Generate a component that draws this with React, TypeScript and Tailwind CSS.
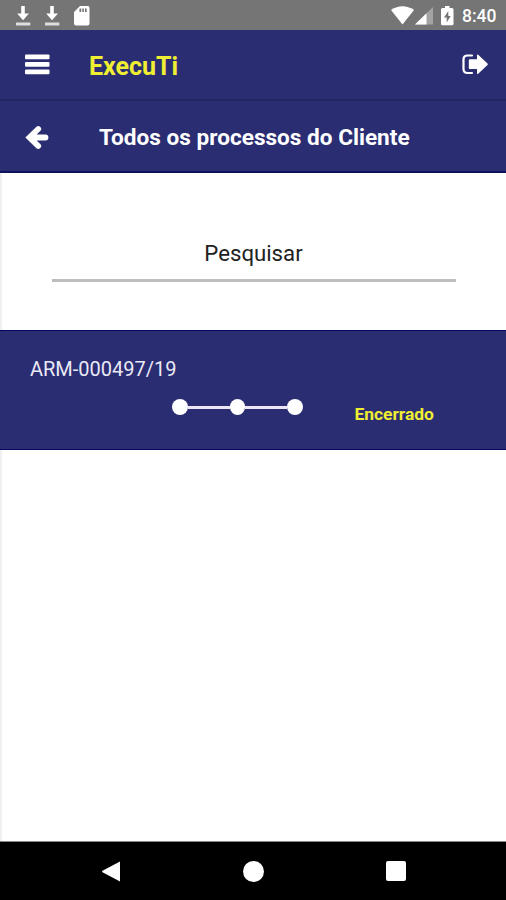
const steps = [0, 1, 2];

function DownloadIcon() {
  return (
    <svg className="h-[20px] w-[15px]" viewBox="0 0 15 20" fill="none">
      <path d="M5.2 0h3.600v7.500H13L7 14.200 1.200 7.500h4z" fill="#fff" />
      <path d="M0 16.500h14.300v3H0z" fill="#dedede" />
    </svg>
  );
}

function StatusBar() {
  return (
    <div className="flex h-[30px] items-start bg-[#757575] pl-[16px] pt-[5.5px]">
      <DownloadIcon />
      <div className="ml-[14px]">
        <DownloadIcon />
      </div>
      <svg className="ml-[13.5px] h-[20px] w-[16px]" viewBox="0 0 16 20">
        <path
          fillRule="evenodd"
          d="M6 0h7.7Q15.5 0 15.5 2v15.500q0 2-2 2H2q-2 0-2-2V6zM5.500 2.500v3.500h1.700V2.500zM8.300 2.500v3.500h1.600V2.500zM11 2.500v3.500h1.700V2.500z"
          fill="#fff"
        />
      </svg>

      <svg className="ml-[301px] h-[19px] w-[23px]" viewBox="0 0 23 19">
        <path d="M0 4Q11.500-3.500 23 4L11.500 18.500z" fill="#fff" />
      </svg>
      <svg className="ml-[1px] h-[19px] w-[18px]" viewBox="0 0 18 19">
        <path d="M18 1v17.500H0z" fill="#a3a3a3" />
        <path d="M11.500 7.300v11.200H0z" fill="#fff" />
      </svg>
      <svg className="ml-[8.500px] h-[20px] w-[13px]" viewBox="0 0 13 20">
        <path d="M4 0h4.500v2H11q1.500 0 1.500 1.500v14.200q0 1.500-1.500 1.500H1.500Q0 19.200 0 17.700V3.500Q0 2 1.500 2H4z" fill="#fff" />
        <path d="M7.300 5 3 11.500h2.700V16.500L9.700 10H7.300z" fill="#757575" />
      </svg>
      <span className="ml-[8px] text-[17.500px] font-medium leading-[20px] text-white">8:40</span>
    </div>
  );
}

function Header() {
  return (
    <header className="text-white">
      <div className="flex h-[69px] items-center bg-[#2b2d73] pl-[25px] pr-[18px]">
        <svg className="h-[21px] w-[25px]" viewBox="0 0 25 21" fill="#fff">
          <rect y="0.500" width="24.500" height="4.700" rx="1" />
          <rect y="8" width="24.500" height="4.700" rx="1" />
          <rect y="15.500" width="24.500" height="4.700" rx="1" />
        </svg>
        <h1 className="ml-[39px] mt-[4px] text-[25px] font-bold leading-8 text-[#efee32]">ExecuTi</h1>
        <svg className="ml-auto h-[21px] w-[26px]" viewBox="0 0 26 21">
          <path d="M10 1.500H5.500Q1.500 1.500 1.500 5.500v9.500q0 4 4 4h4.500" fill="none" stroke="#fff" strokeWidth="2.200" strokeLinecap="round" />
          <path d="M8 5.300h7V1.300q0-1.400 1.200-.5l9.300 8.800q.7.700 0 1.400l-9.300 8.700q-1.200.8-1.200-.6v-4H8q-1.200 0-1.200-1.200V6.500q0-1.200 1.200-1.200z" fill="#fff" />
        </svg>
      </div>
      <div className="flex h-[74px] items-center border-t-2 border-b-2 border-t-[#24255f] border-b-[#11105f] bg-[#2b2d73] pl-[25px]">
        <svg className="mt-[2px] h-[25px] w-[24px]" viewBox="0 0 24 25">
          <path d="M13.200 4 4.500 12.500l8.700 8.500M5.500 12.500h15" fill="none" stroke="#fff" strokeWidth="5.800" strokeLinejoin="miter" strokeLinecap="round" />
        </svg>
        <h2 className="ml-[50px] mt-[3px] text-[22.600px] font-bold leading-8">Todos os processos do Cliente</h2>
      </div>
    </header>
  );
}

function SearchField() {
  return (
    <div className="flex h-[157px] flex-col border-l-2 border-[#f0f0f0] pl-[50px] pr-[50px] pt-[60px]">
      <div className="h-[49px] border-b-[3px] border-[#bdbdbd] pt-[5px] pr-[1px] text-center text-[22.200px] leading-[30px] text-[#212121]">
        Pesquisar
      </div>
    </div>
  );
}

function ProcessCard() {
  return (
    <section className="flex h-[120px] border-y border-[#06055a] bg-[#2b2d73]">
      <div className="w-[172px] pl-[30px] pt-[24px] text-[20px] leading-7 text-[#e9e9f5]">
        <span className="whitespace-nowrap">ARM-000497/19</span>
      </div>
      <div className="mt-[68px] flex h-4 items-center">
        {steps.map((step) => (
          <div key={step} className="flex items-center">
            {step > 0 && <span className="h-[3px] w-[42px] bg-[#ece6f7]" />}
            <span className="h-[16px] w-[15.500px] rounded-full bg-white" />
          </div>
        ))}
      </div>
      <span className="ml-[52px] mt-[71px] text-[17.400px] font-bold leading-6 text-[#efee32]">Encerrado</span>
    </section>
  );
}

function NavigationBar() {
  return (
    <nav className="flex h-[59px] items-center border-t border-[#888] bg-black pl-[102px]">
      <svg className="h-[21px] w-[19px]" viewBox="0 0 19 21">
        <path d="M18 .500v20L.500 11.200q-.8-.7 0-1.400z" fill="#fff" />
      </svg>
      <span className="ml-[122px] h-[21px] w-[21px] rounded-full bg-white" />
      <span className="ml-[122px] h-[20px] w-[20px] rounded-[2px] bg-white" />
    </nav>
  );
}

export default function App() {
  return (
    <div className="flex h-[900px] w-[506px] flex-col overflow-hidden bg-white font-['Roboto',sans-serif]">
      <StatusBar />
      <Header />
      <SearchField />
      <ProcessCard />
      <main className="flex-1 border-l-2 border-[#f0f0f0]" />
      <NavigationBar />
    </div>
  );
}
